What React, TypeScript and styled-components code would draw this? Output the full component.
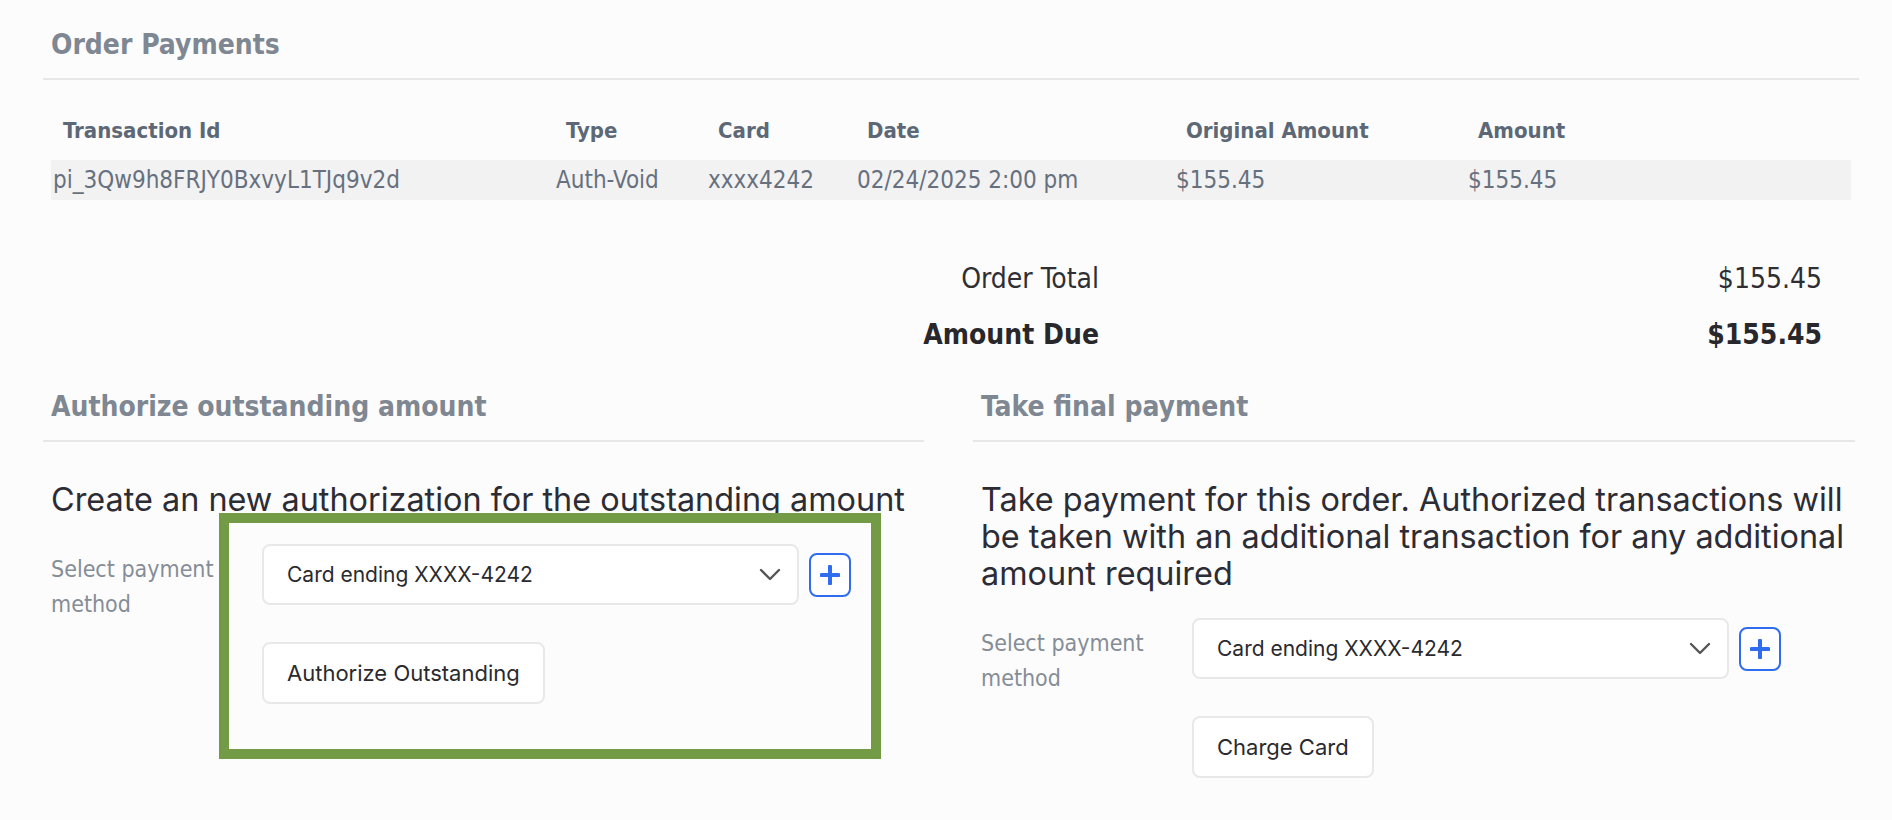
import React from 'react';
import styled, { createGlobalStyle } from 'styled-components';

const narrow = `"DejaVu Sans Condensed", "DejaVu Sans", Verdana, sans-serif`;
const ui = `Inter, "Liberation Sans", Arial, sans-serif`;

const GlobalStyle = createGlobalStyle`
  html, body {
    margin: 0;
    padding: 0;
    background: #fcfcfc;
  }
  body {
    font-family: ${narrow};
  }
`;

interface Payment {
  id: string;
  type: string;
  card: string;
  date: string;
  original: string;
  amount: string;
}

const payments: Payment[] = [
  {
    id: 'pi_3Qw9h8FRJY0BxvyL1TJq9v2d',
    type: 'Auth-Void',
    card: 'xxxx4242',
    date: '02/24/2025 2:00 pm',
    original: '$155.45',
    amount: '$155.45',
  },
];

// widths of the payment table columns
const columns = [503, 152, 149, 319, 292, 385];

const Page = styled.div`
  min-height: 820px;
  box-sizing: border-box;
  padding: 28px 33px 0 43px;
  background: #fcfcfc;
`;

const SectionTitle = styled.h2`
  margin: 0;
  padding: 0 8px 16px;
  font-family: ${narrow};
  font-stretch: condensed;
  font-size: 28px;
  line-height: 34px;
  font-weight: 700;
  color: #7e8792;
  border-bottom: 2px solid #e7e7e7;
`;

const Table = styled.table`
  margin: 20px 8px 0;
  width: 1800px;
  border-collapse: collapse;
  table-layout: fixed;
  font-family: ${narrow};
  font-stretch: condensed;
`;

const Col = styled.col<{ $w: number }>`
  width: ${(p) => p.$w}px;
`;

const HeadCell = styled.th`
  height: 60px;
  padding: 0 0 0 12px;
  text-align: left;
  font-size: 22px;
  font-weight: 700;
  color: #5d6877;
`;

const Cell = styled.td`
  height: 40px;
  padding: 0 0 0 2px;
  font-size: 24px;
  color: #66707e;
  background: #f2f2f2;
  white-space: nowrap;
`;

const Totals = styled.div`
  display: grid;
  grid-template-columns: 1fr 723px;
  margin: 51px 37px 0 8px;
  font-family: ${narrow};
  font-stretch: condensed;
`;

const TotalText = styled.div<{ $strong?: boolean }>`
  text-align: right;
  font-size: 28px;
  line-height: 56px;
  font-weight: ${(p) => (p.$strong ? 700 : 400)};
  color: ${(p) => (p.$strong ? '#28282c' : '#2f2f33')};
`;

const Columns = styled.div`
  display: grid;
  grid-template-columns: 881px 882px;
  column-gap: 49px;
  margin-top: 27px;
`;

const Column = styled.section`
  display: flex;
  flex-direction: column;
`;

const Description = styled.p`
  margin: 39px 0 0;
  padding: 0 8px;
  font-family: ${ui};
  font-size: 32.4px;
  line-height: 37px;
  color: #2c2c34;
  white-space: nowrap;
`;

const FormBlock = styled.div`
  position: relative;
  display: grid;
  grid-template-columns: 211px auto;
  grid-template-rows: auto auto;
  row-gap: 37px;
  align-items: start;
  margin-top: 26px;
  padding-left: 8px;
`;

const FieldLabel = styled.label`
  grid-row: 1 / span 2;
  padding-top: 8px;
  font-family: ${narrow};
  font-stretch: condensed;
  font-size: 23px;
  line-height: 35px;
  color: #858d97;
`;

const ControlRow = styled.div`
  display: flex;
  align-items: center;
  gap: 10px;
`;

const Select = styled.div`
  width: 537px;
  height: 61px;
  box-sizing: border-box;
  display: flex;
  align-items: center;
  justify-content: space-between;
  padding: 0 16px 0 23px;
  border: 2px solid #e8e8e8;
  border-radius: 8px;
  background: #fff;
  font-family: ${ui};
  font-size: 21px;
  color: #2a2a2e;
`;

const AddButton = styled.button`
  width: 42px;
  height: 44px;
  box-sizing: border-box;
  display: flex;
  align-items: center;
  justify-content: center;
  padding: 0;
  border: 2px solid #2f6cf0;
  border-radius: 8px;
  background: #fff;
  cursor: pointer;
`;

const ActionButton = styled.button`
  grid-column: 2;
  justify-self: start;
  height: 62px;
  box-sizing: border-box;
  padding: 0 23px;
  border: 2px solid #e8e8e8;
  border-radius: 8px;
  background: #fff;
  font-family: ${ui};
  font-size: 22px;
  color: #2a2a2e;
  cursor: pointer;
`;

// green annotation frame drawn over the authorize form
const Highlight = styled.div`
  position: absolute;
  left: 176px;
  top: -31px;
  width: 662px;
  height: 246px;
  box-sizing: border-box;
  border: 10px solid #739b45;
  pointer-events: none;
`;

const Chevron = () => (
  <svg width="22" height="13" viewBox="0 0 22 13" fill="none">
    <path d="M2 2l9 9 9-9" stroke="#555" strokeWidth="2.4" strokeLinecap="round" strokeLinejoin="round" />
  </svg>
);

const Plus = () => (
  <svg width="20" height="20" viewBox="0 0 20 20" fill="none">
    <path d="M10 1.5v17M1.5 10h17" stroke="#2f6cf0" strokeWidth="4" strokeLinecap="round" />
  </svg>
);

const PaymentForm: React.FC<{ action: string; highlighted?: boolean }> = ({ action, highlighted }) => (
  <FormBlock>
    <FieldLabel>Select payment method</FieldLabel>
    <ControlRow>
      <Select>
        <span>Card ending XXXX-4242</span>
        <Chevron />
      </Select>
      <AddButton>
        <Plus />
      </AddButton>
    </ControlRow>
    <ActionButton>{action}</ActionButton>
    {highlighted && <Highlight />}
  </FormBlock>
);

export default function App() {
  return (
    <Page>
      <GlobalStyle />
      <SectionTitle>Order Payments</SectionTitle>
      <Table>
        <colgroup>
          {columns.map((w, i) => (
            <Col key={i} $w={w} />
          ))}
        </colgroup>
        <thead>
          <tr>
            <HeadCell>Transaction Id</HeadCell>
            <HeadCell>Type</HeadCell>
            <HeadCell>Card</HeadCell>
            <HeadCell>Date</HeadCell>
            <HeadCell>Original Amount</HeadCell>
            <HeadCell>Amount</HeadCell>
          </tr>
        </thead>
        <tbody>
          {payments.map((p) => (
            <tr key={p.id}>
              <Cell>{p.id}</Cell>
              <Cell>{p.type}</Cell>
              <Cell>{p.card}</Cell>
              <Cell>{p.date}</Cell>
              <Cell>{p.original}</Cell>
              <Cell>{p.amount}</Cell>
            </tr>
          ))}
        </tbody>
      </Table>

      <Totals>
        <TotalText>Order Total</TotalText>
        <TotalText>$155.45</TotalText>
        <TotalText $strong>Amount Due</TotalText>
        <TotalText $strong>$155.45</TotalText>
      </Totals>

      <Columns>
        <Column>
          <SectionTitle>Authorize outstanding amount</SectionTitle>
          <Description>Create an new authorization for the outstanding amount</Description>
          <PaymentForm action="Authorize Outstanding" highlighted />
        </Column>
        <Column>
          <SectionTitle>Take final payment</SectionTitle>
          <Description>
            Take payment for this order. Authorized transactions will
            <br />
            be taken with an additional transaction for any additional
            <br />
            amount required
          </Description>
          <PaymentForm action="Charge Card" />
        </Column>
      </Columns>
    </Page>
  );
}
